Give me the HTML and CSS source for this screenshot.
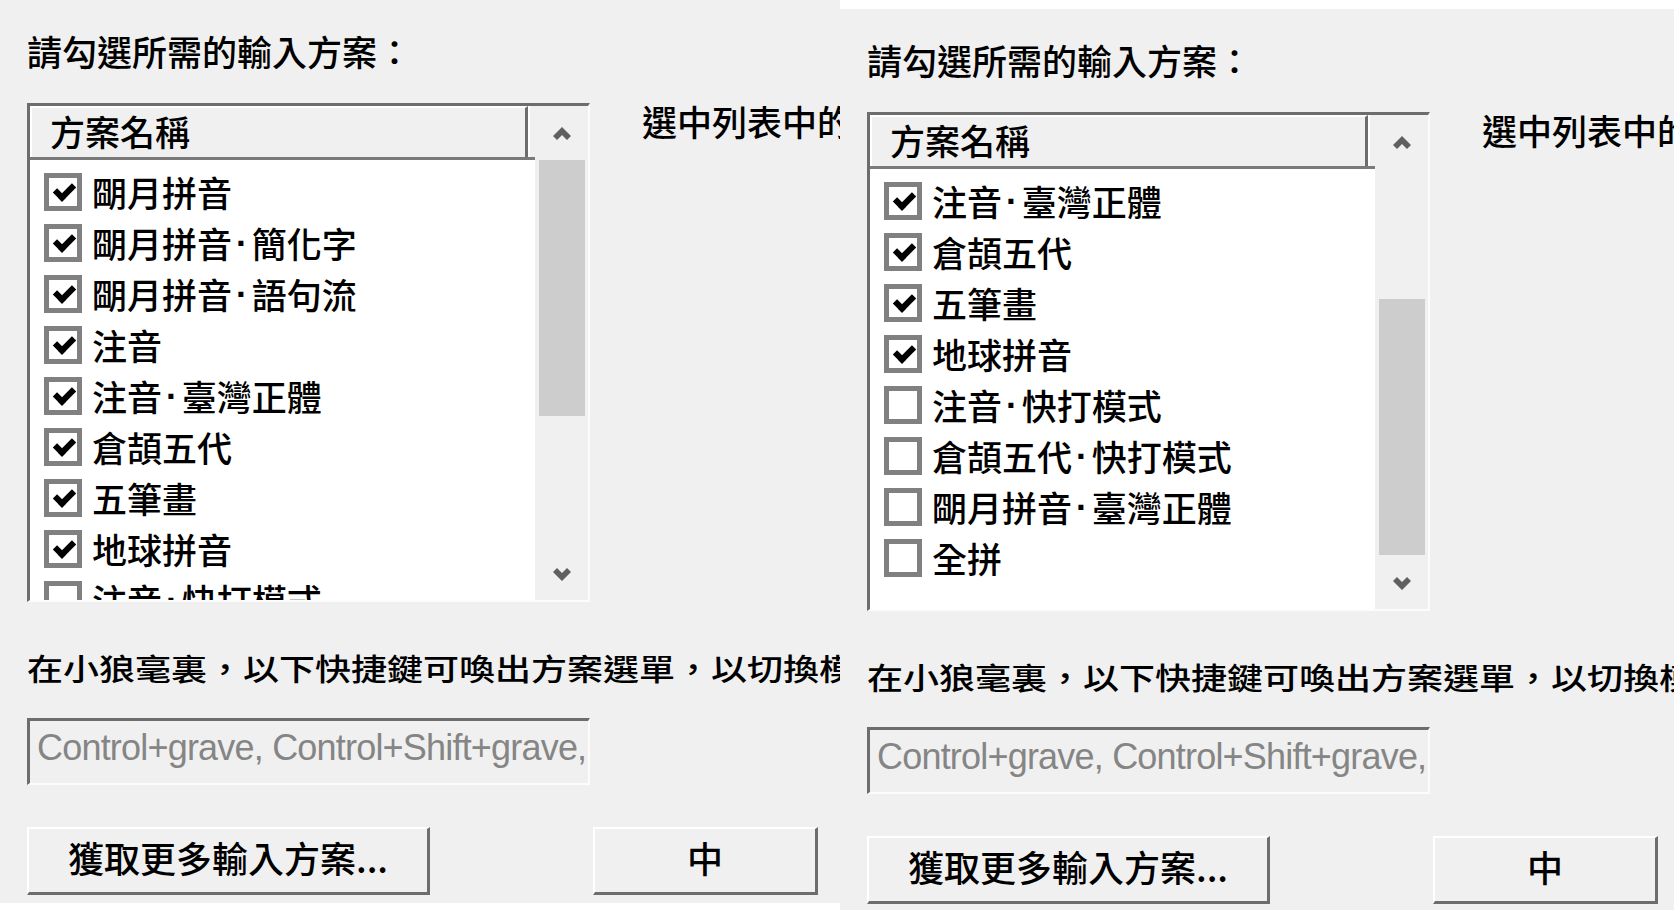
FILE: index.html
```html
<!DOCTYPE html>
<html lang="zh-Hant">
  <head>
    <meta charset="UTF-8" />
    <title>小狼毫 輸入方案設定</title>
    <link rel="stylesheet" href="styles.css">
  </head>
  <body>
    <div class="dialog">
      <p class="prompt">請勾選所需的輸入方案：</p>
      <div class="schema-row">
        <div class="listbox">
          <div class="list-pane">
            <div class="list-header"><span class="col-name">方案名稱</span></div>
            <div class="list-body">
              <ul class="schema-list">
                <li class="schema checked"><span class="check"></span>朙月拼音</li>
                <li class="schema checked"><span class="check"></span>朙月拼音<span class="sep">·</span>簡化字</li>
                <li class="schema checked"><span class="check"></span>朙月拼音<span class="sep">·</span>語句流</li>
                <li class="schema checked"><span class="check"></span>注音</li>
                <li class="schema checked"><span class="check"></span>注音<span class="sep">·</span>臺灣正體</li>
                <li class="schema checked"><span class="check"></span>倉頡五代</li>
                <li class="schema checked"><span class="check"></span>五筆畫</li>
                <li class="schema checked"><span class="check"></span>地球拼音</li>
                <li class="schema"><span class="check"></span>注音<span class="sep">·</span>快打模式</li>
                <li class="schema"><span class="check"></span>倉頡五代<span class="sep">·</span>快打模式</li>
                <li class="schema"><span class="check"></span>朙月拼音<span class="sep">·</span>臺灣正體</li>
                <li class="schema"><span class="check"></span>全拼</li>
              </ul>
            </div>
          </div>
          <div class="scrollbar">
            <div class="arrow up">
              <svg width="20" height="14" viewBox="0 0 20 14"><polygon points="1,10 10,1 19,10 15,14 10,9 5,14" /></svg>
            </div>
            <div class="track"><div class="thumb"></div></div>
            <div class="arrow down">
              <svg width="20" height="14" viewBox="0 0 20 14"><polygon points="1,4 5,0 10,5 15,0 19,4 10,13" /></svg>
            </div>
          </div>
        </div>
        <p class="description">選中列表中的輸入方案以查看簡介</p>
      </div>
      <p class="hotkey-label">在小狼毫裏，以下快捷鍵可喚出方案選單，以切換模式或選用其他輸入方案。</p>
      <div class="hotkeys">Control+grave, Control+Shift+grave, F4</div>
      <div class="buttons">
        <button class="btn btn-more">獲取更多輸入方案...</button>
        <button class="btn btn-lang">中</button>
      </div>
    </div>

    <div class="dialog scrolled">
      <p class="prompt">請勾選所需的輸入方案：</p>
      <div class="schema-row">
        <div class="listbox">
          <div class="list-pane">
            <div class="list-header"><span class="col-name">方案名稱</span></div>
            <div class="list-body">
              <ul class="schema-list">
                <li class="schema checked"><span class="check"></span>朙月拼音</li>
                <li class="schema checked"><span class="check"></span>朙月拼音<span class="sep">·</span>簡化字</li>
                <li class="schema checked"><span class="check"></span>朙月拼音<span class="sep">·</span>語句流</li>
                <li class="schema checked"><span class="check"></span>注音</li>
                <li class="schema checked"><span class="check"></span>注音<span class="sep">·</span>臺灣正體</li>
                <li class="schema checked"><span class="check"></span>倉頡五代</li>
                <li class="schema checked"><span class="check"></span>五筆畫</li>
                <li class="schema checked"><span class="check"></span>地球拼音</li>
                <li class="schema"><span class="check"></span>注音<span class="sep">·</span>快打模式</li>
                <li class="schema"><span class="check"></span>倉頡五代<span class="sep">·</span>快打模式</li>
                <li class="schema"><span class="check"></span>朙月拼音<span class="sep">·</span>臺灣正體</li>
                <li class="schema"><span class="check"></span>全拼</li>
              </ul>
            </div>
          </div>
          <div class="scrollbar">
            <div class="arrow up">
              <svg width="20" height="14" viewBox="0 0 20 14"><polygon points="1,10 10,1 19,10 15,14 10,9 5,14" /></svg>
            </div>
            <div class="track"><div class="thumb"></div></div>
            <div class="arrow down">
              <svg width="20" height="14" viewBox="0 0 20 14"><polygon points="1,4 5,0 10,5 15,0 19,4 10,13" /></svg>
            </div>
          </div>
        </div>
        <p class="description">選中列表中的輸入方案以查看簡介</p>
      </div>
      <p class="hotkey-label">在小狼毫裏，以下快捷鍵可喚出方案選單，以切換模式或選用其他輸入方案。</p>
      <div class="hotkeys">Control+grave, Control+Shift+grave, F4</div>
      <div class="buttons">
        <button class="btn btn-more">獲取更多輸入方案...</button>
        <button class="btn btn-lang">中</button>
      </div>
    </div>
  </body>
</html>
```

FILE: styles.css
```css
body {
  margin: 0;
  height: 910px;
  overflow: hidden;
  display: flex;
  align-items: flex-start;
  background-color: #fff;
  font-family: "Noto Sans CJK TC", sans-serif;
  font-weight: 500;
  color: #000;
}
.dialog {
  flex: 0 0 840px;
  height: 903px;
  box-sizing: border-box;
  padding: 31px 0 0 27px;
  background-color: #f0f0f0;
  overflow: hidden;
}
.dialog.scrolled {
  margin-top: 9px;
  height: 901px;
}
.prompt {
  margin: 0;
  font-size: 35px;
  line-height: 40px;
  white-space: nowrap;
}
.schema-row {
  display: flex;
  align-items: flex-start;
  margin-top: 32px;
}

/* 清單框 */
.listbox {
  display: flex;
  flex-shrink: 0;
  width: 563px;
  height: 499px;
  box-sizing: border-box;
  border-style: solid;
  border-width: 3px 2px 2px 3px;
  border-color: #6d6d6d #fcfcfc #fcfcfc #6d6d6d;
  background-color: #fff;
}
.list-pane {
  width: 505px;
  display: flex;
  flex-direction: column;
}
.list-header {
  display: flex;
  height: 54px;
  box-sizing: border-box;
  border-bottom: 3px solid #7a7a7a;
  background-color: #f0f0f0;
}
.col-name {
  width: 498px;
  box-sizing: border-box;
  border-top: 2px solid #fff;
  border-left: 2px solid #fff;
  border-right: 3px solid #6d6d6d;
  box-shadow: 2px 0 0 #fff;
  padding-left: 18px;
  font-size: 35px;
  line-height: 46px;
}
.list-body {
  flex: 1;
  overflow: hidden;
}
.schema-list {
  list-style: none;
  margin: 0;
  padding: 6px 0 0;
}
.scrolled .schema-list {
  margin-top: -204px; /* 捲動了四列 */
}
.schema {
  display: flex;
  align-items: center;
  height: 51px;
  padding-left: 14px;
  font-size: 35px;
  white-space: nowrap;
}
.sep {
  font-family: "Liberation Sans", sans-serif;
  font-weight: bold;
  margin: 0 4px;
}
.check {
  position: relative;
  flex-shrink: 0;
  width: 38px;
  height: 38px;
  box-sizing: border-box;
  border: 5px solid #808080;
  background-color: #fff;
  margin-right: 10px;
}
.schema.checked .check::after {
  content: "";
  position: absolute;
  left: 9px;
  top: 2px;
  width: 7px;
  height: 14px;
  border: solid #000;
  border-width: 0 6px 6px 0;
  transform: rotate(45deg);
}

/* 捲軸 */
.scrollbar {
  width: 53px;
  display: flex;
  flex-direction: column;
  background-color: #f0f0f0;
}
.arrow {
  display: flex;
  justify-content: center;
  align-items: center;
}
.arrow svg polygon {
  fill: #606060;
}
.arrow.up {
  height: 54px;
}
.arrow.down {
  flex: 1;
}
.track {
  height: 390px;
  padding: 0 3px 0 4px;
}
.thumb {
  height: 256px;
  background-color: #cdcdcd;
}
.scrolled .thumb {
  margin-top: 130px;
}

.description {
  margin: -2px 0 0 52px;
  font-size: 35px;
  line-height: 40px;
  white-space: nowrap;
}
.hotkey-label {
  margin: 47px 0 0;
  font-size: 30px;
  line-height: 36px;
  white-space: nowrap;
  transform: scaleX(1.2);
  transform-origin: left;
}
.hotkeys {
  margin-top: 33px;
  width: 563px;
  height: 67px;
  box-sizing: border-box;
  border-style: solid;
  border-width: 3px 2px 2px 3px;
  border-color: #6d6d6d #fcfcfc #fcfcfc #6d6d6d;
  padding: 2px 7px 0;
  font-family: "Liberation Sans", sans-serif;
  font-weight: normal;
  font-size: 36px;
  line-height: 50px;
  letter-spacing: -0.8px;
  color: #858585;
  white-space: nowrap;
  overflow: hidden;
}

/* 按鈕 */
.buttons {
  display: flex;
  gap: 163px;
  margin-top: 42px;
}
.btn {
  height: 68px;
  box-sizing: border-box;
  border-style: solid;
  border-width: 2px 3px 3px 2px;
  border-color: #fff #6d6d6d #6d6d6d #fff;
  background-color: #f0f0f0;
  padding: 0 0 8px;
  font-family: inherit;
  font-weight: inherit;
  font-size: 36px;
  color: #000;
}
.btn-more {
  width: 403px;
}
.btn-lang {
  width: 225px;
}
```
